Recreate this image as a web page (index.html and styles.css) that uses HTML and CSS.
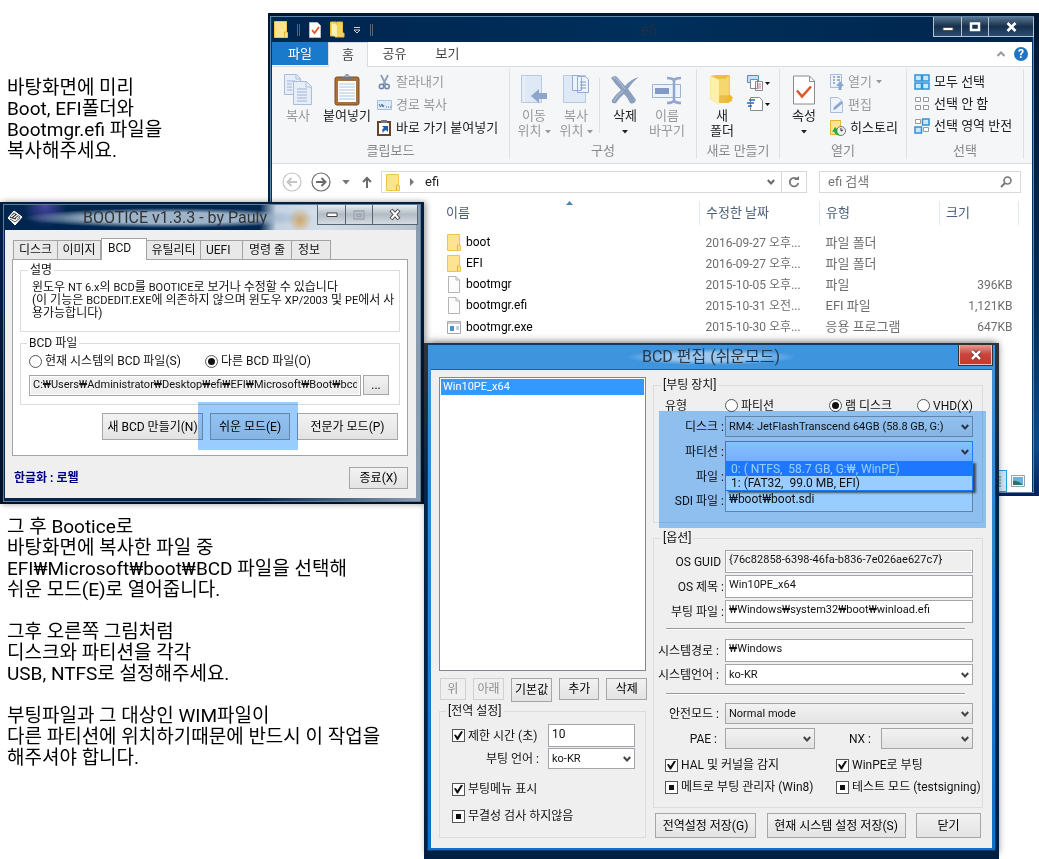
FILE: index.html
```html
<!DOCTYPE html>
<html lang="ko">
<head>
<meta charset="utf-8">
<title>BOOTICE BCD 설정 안내</title>
<link rel="stylesheet" href="styles.css">
</head>
<body>
<svg class="defs" aria-hidden="true">
  <symbol id="folder" viewBox="0 0 14 17"><path d="M.5.5h12v11h1v5H.5z" fill="#ffe391" stroke="#eec544"/><path d="M10.5 16v-5h2" fill="none" stroke="#e5b62d"/></symbol>
  <symbol id="page" viewBox="0 0 12 17"><path d="M.5.5h7.500l3.500 3.500v12.500H.5z" fill="#fcfcfc" stroke="#b5b5b5"/><path d="M8 .5V4h3.500" fill="none" stroke="#b5b5b5"/></symbol>
  <symbol id="chev" viewBox="0 0 8 6"><path d="M.8 1L4 4.500 7.200 1" fill="none" stroke="#444" stroke-width="2"/></symbol>
  <symbol id="down" viewBox="0 0 6 4"><path d="M0 0h6L3 3.500z" fill="currentColor"/></symbol>
</svg>
<main class="stage">
  <div class="note note-top">바탕화면에 미리<br>Boot, EFI폴더와<br>Bootmgr.efi 파일을<br>복사해주세요.</div>

  <section class="desk desk-explorer">
    <div class="explorer">
      <header class="ex-title">
        <svg class="i-folder" width="14" height="17"><use href="#folder"/></svg>
        <span class="tick"></span>
        <svg width="12" height="16" viewBox="0 0 12 16"><path d="M.5.5h8l3 3v12H.5z" fill="#fff" stroke="#bbb"/><path d="M3 8l2.500 3L10 5" fill="none" stroke="#e0562b" stroke-width="1.800"/></svg>
        <svg width="14" height="17" viewBox="0 0 14 17"><path d="M.5 1h6v14h-6zM7 1h5.500v11H14v4H5z" fill="#f5d262" stroke="#e9bb3f"/><path d="M2 2l5 2v12l-5-2z" fill="#fff0b0"/></svg>
        <svg width="8" height="8" viewBox="0 0 8 8"><path d="M1 1.500h6M1 4h6L4 7z" stroke="#fff" stroke-width=".8" fill="#111"/></svg>
        <span class="tick"></span>
        <h2>efi</h2>
        <div class="caption">
          <button aria-label="최소화"><svg width="12" height="10" viewBox="0 0 12 10"><path d="M1 5.500h10v3H1z" fill="#fff" stroke="#555"/></svg></button>
          <button aria-label="최대화"><svg width="12" height="10" viewBox="0 0 12 10"><path d="M2 1.500h8v6.500H2z" fill="none" stroke="#fff" stroke-width="2.500"/></svg></button>
          <button class="wide" aria-label="닫기"><svg width="11" height="10" viewBox="0 0 11 10"><path d="M1.500 1l8 8M9.500 1l-8 8" stroke="#fff" stroke-width="2.600"/></svg></button>
        </div>
      </header>
      <nav class="ex-tabs">
        <button class="file">파일</button><button class="home">홈</button><button>공유</button><button>보기</button>
        <svg class="up" width="10" height="8" viewBox="0 0 10 8"><path d="M1.500 6L5 2.500 8.500 6" fill="none" stroke="#999" stroke-width="2"/></svg>
        <span class="help">?</span>
      </nav>
      <div class="ribbon">
        <section class="grp g1">
          <div class="tools">
            <button class="big off w1"><svg width="28" height="32" viewBox="0 0 28 32"><g fill="#e7eef8" stroke="#a9bddb"><path d="M.5.5h12l4 4v16H.5z"/><path d="M9.500 7.500h13l5 5v18h-18z"/><path d="M22 8v5h5M12 .5V5h4" fill="none"/></g><path d="M3 7h8M3 10h5M3 13h5M3 16h5M13 15h10M13 18h10M13 21h10M13 24h10M13 27h10" stroke="#9fb3d3"/></svg><span>복사</span></button>
            <button class="big w2"><svg width="26" height="32" viewBox="0 0 26 32"><rect x="1" y="3" width="24" height="28" rx="2" fill="#a8703a" stroke="#7c4d22"/><path d="M4 7h18v21H4z" fill="#fff"/><path d="M5 10h16M5 13h16M5 16h16M5 19h16M5 22h16M5 25h16" stroke="#a9c3df"/><path d="M6 6q2-3 4-3 1-3 3-3t3 3q2 0 4 3z" fill="#707780"/><path d="M11 2h4" stroke="#ddd"/></svg><span>붙여넣기</span></button>
            <div class="stack">
              <button class="small off"><svg width="15" height="16" viewBox="0 0 15 16"><path d="M4 1l5 10M11 1L6 11" stroke="#8e9fb9" stroke-width="1.800"/><circle cx="4.500" cy="12.500" r="2.200" fill="none" stroke="#6f86ab" stroke-width="1.500"/><circle cx="10" cy="12.500" r="2.200" fill="none" stroke="#6f86ab" stroke-width="1.500"/></svg>잘라내기</button>
              <button class="small off"><svg width="15" height="10" viewBox="0 0 15 10"><path d="M.5.5h14v9H.5z" fill="#e0ebf8" stroke="#a5bfde"/><path d="M2 4l1.500 3L5 4l1 3 1-2M9 7h1M11 7h1M13 7h1" stroke="#54729e" fill="none"/></svg>경로 복사</button>
              <button class="small"><svg width="15" height="16" viewBox="0 0 15 16"><rect x="1" y="2" width="12" height="13" fill="#fff" stroke="#674424" stroke-width="2"/><path d="M4 0h6v3H4z" fill="#777"/><path d="M5 6h6v6L9 10q-3 1-3 3-2-4 1-5z" fill="#1c5ea8"/></svg>바로 가기 붙여넣기</button>
            </div>
          </div>
          <h3>클립보드</h3>
        </section>
        <section class="grp g2">
          <div class="tools">
            <button class="big off w3"><svg width="27" height="30" viewBox="0 0 27 30"><path d="M.5.5h20v27H.5z" fill="#dfe8f5" stroke="#b9c9e2"/><path d="M3 1v26" stroke="#f3f7fc"/><path d="M10 21l8-7v4h8v6h-8v4z" fill="#8ea6cc"/></svg><span>이동<br>위치 <svg width="6" height="4"><use href="#down"/></svg></span></button>
            <button class="big off w3"><svg width="27" height="30" viewBox="0 0 27 30"><path d="M.5.5h22v27H.5z" fill="#dfe8f5" stroke="#b9c9e2"/><path d="M9.500.5h7l2 2v13h-9zM14.500 1.500h8l3 3v13h-11z" fill="#edf3fb" stroke="#93abd0"/><path d="M17 7h6M17 10h6M17 13h6" stroke="#7e98c3"/></svg><span>복사<br>위치 <svg width="6" height="4"><use href="#down"/></svg></span></button>
            <span class="vline"></span>
            <button class="big w3"><svg width="30" height="30" viewBox="0 0 30 30"><path d="M1 3q4-4 7 0l7 8Q21 4 29 2q-6 4-11 12 4 5 8 11-2 5-6 3-2-5-6-9-5 4-8 9-5 1-4-3 3-5 9-10Q5 9 1 3z" fill="#8b9fbe"/><path d="M3 3q2-1 5 2l7 9M4 26q3-6 9-10" stroke="#b3c3da" fill="none"/></svg><span>삭제<br><svg width="6" height="4"><use href="#down"/></svg></span></button>
            <button class="big off w3"><svg width="30" height="28" viewBox="0 0 30 28"><path d="M.5 8.500h28v13H.5z" fill="#edf3fb" stroke="#9fb3d5"/><path d="M3 12h14v6H3z" fill="#8299c3"/><path d="M15 2q5 0 7 2 2-2 7-2M22 4v21M15 27q5 0 7-2 2 2 7 2" fill="none" stroke="#90a8cf" stroke-width="2.500"/></svg><span>이름<br>바꾸기</span></button>
          </div>
          <h3>구성</h3>
        </section>
        <section class="grp g3">
          <div class="tools">
            <button class="big w4"><svg width="28" height="33" viewBox="0 0 28 33"><path d="M2 2l6-1h14v20l3 3-4 6H8l-6-4z" fill="#e9bf45"/><path d="M2 2l9 4v26l-9-6z" fill="#fff0ac"/><path d="M11 5h7l3-4v21H11z" fill="#f6d66e"/><path d="M20 22l5 2-1 4-7 2z" fill="#edb92e"/></svg><span>새<br>폴더</span></button>
            <div class="stack pair">
              <svg width="24" height="17" viewBox="0 0 24 17"><path d="M.5.5h11v7H.5z" fill="#bfe2fa" stroke="#4794c9"/><path d="M3.500 4.500h7v9h-7zM8.500 6.500h7v9h-7z" fill="#fff" stroke="#888"/><path d="M10 9h4M10 11h4M10 13h4" stroke="#c78"/><path d="M18 7h5l-2.500 3z" fill="#111"/></svg>
              <svg width="24" height="17" viewBox="0 0 24 17"><path d="M3.500 1.500h9l3 3v10h-12z" fill="#fff" stroke="#888"/><path d="M0 7h7M2 4h6M1 10h4" stroke="#2668c5" stroke-width="1.500"/><path d="M18 7h5l-2.500 3z" fill="#111"/></svg>
            </div>
          </div>
          <h3>새로 만들기</h3>
        </section>
        <section class="grp g4">
          <div class="tools">
            <button class="big w5"><svg width="22" height="29" viewBox="0 0 22 29"><path d="M.5.5h16l5 5v23H.5z" fill="#fff" stroke="#8a8a8a"/><path d="M16.500 1v5H21" fill="none" stroke="#8a8a8a"/><path d="M4 15l5 6 9-10" fill="none" stroke="#e0562b" stroke-width="2.600"/></svg><span>속성<br><svg width="6" height="4"><use href="#down"/></svg></span></button>
            <div class="stack">
              <button class="small off"><svg width="14" height="16" viewBox="0 0 14 16"><path d="M.5.5h11v13H.5z" fill="#eef3fb" stroke="#a9bddb"/><path d="M3 3h2M3 6h2M3 9h2M7 3h3M7 6h3" stroke="#8299c3" stroke-width="1.500"/><path d="M6 12l4-5 4 5h-2.500v4h-3v-4z" fill="#8ea6cc"/></svg>열기 <svg class="dn" width="6" height="4"><use href="#down"/></svg></button>
              <button class="small off"><svg width="14" height="16" viewBox="0 0 14 16"><path d="M.5.5h8l4 4v11H.5z" fill="#eef3fb" stroke="#a9bddb"/><path d="M3 13l1-3 7-6 2 2-7 6z" fill="#8ea6cc"/></svg>편집</button>
              <button class="small"><svg width="16" height="16" viewBox="0 0 16 16"><path d="M.5.5h10v14H.5z" fill="#ffe391" stroke="#e5b62d"/><circle cx="11" cy="11" r="4.500" fill="#eee" stroke="#777"/><path d="M11 8v3l2-1" stroke="#333" fill="none"/><path d="M2 12l3-5 3 3-1 .5q0 3 3 5-5 0-6-4z" fill="#2bab3a"/></svg>히스토리</button>
            </div>
          </div>
          <h3>열기</h3>
        </section>
        <section class="grp g5">
          <div class="tools">
            <div class="stack tight">
              <button class="small"><svg width="16" height="16" viewBox="0 0 16 16"><path d="M1 1h6.500v6H1zM8.500 1H15v6H8.500zM1 9h6.500v6H1zM8.500 9H15v6H8.500z" fill="#c9e8fb" stroke="#2f93d6" stroke-width="1.500"/></svg>모두 선택</button>
              <button class="small"><svg width="16" height="16" viewBox="0 0 16 16"><path d="M1.500 1.500h5v4h-5zM9.500 1.500h5v4h-5zM1.500 9.500h5v4h-5zM9.500 9.500h5v4h-5z" fill="#fff" stroke="#999"/></svg>선택 안 함</button>
              <button class="small"><svg width="16" height="16" viewBox="0 0 16 16"><path d="M1.500 1.500h5v4h-5zM9.500 9.500h5v4h-5z" fill="#fff" stroke="#999"/><path d="M8.500 1H15v6H8.500zM1 9h6.500v6H1z" fill="#c9e8fb" stroke="#2f93d6" stroke-width="1.500"/></svg>선택 영역 반전</button>
            </div>
          </div>
          <h3>선택</h3>
        </section>
      </div>
      <div class="address">
        <svg width="20" height="20" viewBox="0 0 20 20"><circle cx="10" cy="10" r="9" fill="none" stroke="#c4c4c4" stroke-width="1.200"/><path d="M15 10H6M9.500 6L5.500 10l4 4" fill="none" stroke="#c4c4c4" stroke-width="1.800"/></svg>
        <svg width="20" height="20" viewBox="0 0 20 20"><circle cx="10" cy="10" r="9" fill="none" stroke="#6b6b6b" stroke-width="1.200"/><path d="M5 10h9M10.500 6l4 4-4 4" fill="none" stroke="#6b6b6b" stroke-width="2"/></svg>
        <svg class="grey" width="8" height="5" viewBox="0 0 6 4"><use href="#down"/></svg>
        <svg width="10" height="12" viewBox="0 0 10 12"><path d="M5 12V2M1 6l4-4 4 4" fill="none" stroke="#6b6b6b" stroke-width="2"/></svg>
        <div class="path">
          <svg width="14" height="17"><use href="#folder"/></svg>
          <svg width="5" height="8" viewBox="0 0 5 8"><path d="M0 0l4 4-4 4z" fill="#777"/></svg>
          <span>efi</span>
          <svg class="push" width="8" height="6"><use href="#chev"/></svg>
          <button aria-label="새로 고침"><svg width="12" height="12" viewBox="0 0 12 12"><path d="M9.500 3.500A4.300 4.300 0 1 0 10.300 7" fill="none" stroke="#777" stroke-width="1.800"/><path d="M6 4h5V0z" fill="#777"/></svg></button>
        </div>
        <label class="search"><input type="text" placeholder="efi 검색" aria-label="efi 검색"><svg width="12" height="12" viewBox="0 0 12 12"><circle cx="7.500" cy="4.500" r="3.500" fill="none" stroke="#777" stroke-width="1.600"/><path d="M5 7l-4 4" stroke="#777" stroke-width="2"/></svg></label>
      </div>
      <div class="ex-body">
        <table>
          <colgroup><col class="c1"><col class="c2"><col class="c3"><col class="c4"></colgroup>
          <thead><tr><th>이름<svg class="sort" width="7" height="4" viewBox="0 0 7 4"><path d="M0 4L3.500 0 7 4z" fill="#4b88ad"/></svg></th><th>수정한 날짜</th><th>유형</th><th>크기</th></tr></thead>
          <tbody>
            <tr><td><svg width="14" height="17"><use href="#folder"/></svg>boot</td><td>2016-09-27 오후...</td><td>파일 폴더</td><td></td></tr>
            <tr><td><svg width="14" height="17"><use href="#folder"/></svg>EFI</td><td>2016-09-27 오후...</td><td>파일 폴더</td><td></td></tr>
            <tr><td><svg width="14" height="17"><use href="#page"/></svg>bootmgr</td><td>2015-10-05 오후...</td><td>파일</td><td>396KB</td></tr>
            <tr><td><svg width="14" height="17"><use href="#page"/></svg>bootmgr.efi</td><td>2015-10-31 오전...</td><td>EFI 파일</td><td>1,121KB</td></tr>
            <tr><td><svg width="14" height="13" viewBox="0 0 14 13"><path d="M.5.5h13v12H.5z" fill="#fff" stroke="#aaa"/><path d="M1 2h12" stroke="#ccc" stroke-width="2"/><path d="M3 5h4v5H3z" fill="#4a94cc"/><path d="M9 6h3M9 8h3" stroke="#8ab"/></svg>bootmgr.exe</td><td>2015-10-30 오후...</td><td>응용 프로그램</td><td>647KB</td></tr>
          </tbody>
        </table>
        <div class="views">
          <button class="on" aria-label="자세히"><svg width="12" height="11" viewBox="0 0 12 11"><path d="M1 1h4M7 1h4M1 4h4M7 4h4M1 7h4M7 7h4M1 10h4M7 10h4" stroke="#777"/></svg></button>
          <button aria-label="큰 아이콘"><svg width="14" height="12" viewBox="0 0 14 12"><path d="M.5.5h13v11H.5z" fill="#fff" stroke="#8aa4b8"/><path d="M2 2h10v8H2z" fill="#67b3e3"/><path d="M2 6q5-1 10 4H2z" fill="#2b7561"/></svg></button>
        </div>
      </div>
    </div>
  </section>

  <section class="desk desk-boot">
    <div class="bootice">
      <header class="bt-title">
        <svg width="16" height="16" viewBox="0 0 16 16"><path d="M7 1l8 6-7 8-7-7z" fill="#fff" stroke="#fff"/><path d="M7 2.500l6.500 4.500L8 9.500 2.500 7.500z" fill="#222"/><path d="M4 7l4-3M6.500 8l4-3M9 8.500l3-2" stroke="#fff" stroke-width="1.200"/><path d="M3 9l5 3 5-4" stroke="#555" fill="none"/></svg>
        <h2>BOOTICE v1.3.3 - by Pauly</h2>
        <div class="caption glass">
          <button aria-label="최소화"><svg width="12" height="6" viewBox="0 0 12 6"><path d="M1 1h10v3.500H1z" fill="#fff" stroke="#444"/></svg></button>
          <button aria-label="최대화"><svg width="12" height="10" viewBox="0 0 12 10"><path d="M1 1h10v8H1zM4 4h4v2.500H4z" fill="none" stroke="#9aa3ad" stroke-width="1.300"/></svg></button>
          <button class="wide" aria-label="닫기"><svg width="12" height="11" viewBox="0 0 12 11"><path d="M2 1l8 9M10 1L2 10" stroke="#444" stroke-width="4"/><path d="M2.500 1.500l7 8M9.500 1.500l-7 8" stroke="#fff" stroke-width="2"/></svg></button>
        </div>
      </header>
      <div class="bt-body">
        <nav class="tabs"><button class="t1">디스크</button><button class="t2">이미지</button><button class="sel">BCD</button><button class="t3">유틸리티</button><button class="t4">UEFI</button><button class="t5">명령 줄</button><button class="t6">정보</button></nav>
        <div class="pane">
          <fieldset class="desc"><legend>설명</legend><p>윈도우 <span>NT 6.x</span>의 <span>BCD</span>를 <span>BOOTICE</span>로 보거나 수정할 수 있습니다<br>(이 기능은 <span>BCDEDIT.EXE</span>에 의존하지 않으며 윈도우 <span>XP/2003</span> 및 <span>PE</span>에서 사<br>용가능합니다)</p></fieldset>
          <fieldset class="bcdfile"><legend>BCD 파일</legend>
            <div class="radios"><label><input type="radio" name="src">현재 시스템의 BCD 파일(S)</label><label><input type="radio" name="src" checked>다른 BCD 파일(O)</label></div>
            <div class="filerow"><input class="box ro" type="text" aria-label="BCD 파일 경로" readonly value="C:₩Users₩Administrator₩Desktop₩efi₩EFI₩Microsoft₩Boot₩bcd"><button class="btn">...</button></div>
          </fieldset>
          <div class="modes"><button class="btn">새 BCD 만들기(N)</button><div class="mark-wrap"><button class="btn">쉬운 모드(E)</button><span class="mark"></span></div><button class="btn">전문가 모드(P)</button></div>
        </div>
        <footer><strong>한글화 : 로웰</strong><button class="btn">종료(X)</button></footer>
      </div>
    </div>
  </section>

  <div class="note note-bottom">그 후 Bootice로<br>바탕화면에 복사한 파일 중<br>EFI₩Microsoft₩boot₩BCD 파일을 선택해<br>쉬운 모드(E)로 열어줍니다.<br><br>그후 오른쪽 그림처럼<br>디스크와 파티션을 각각<br>USB, NTFS로 설정해주세요.<br><br>부팅파일과 그 대상인 WIM파일이<br>다른 파티션에 위치하기때문에 반드시 이 작업을<br>해주셔야 합니다.</div>

  <section class="desk desk-edit">
    <div class="edit">
      <header class="ed-title"><h2>BCD 편집 (쉬운모드)</h2><button aria-label="닫기"><svg width="12" height="10" viewBox="0 0 12 10"><path d="M2 1l8 8M10 1L2 9" stroke="#622" stroke-width="4"/><path d="M2 1l8 8M10 1L2 9" stroke="#fff" stroke-width="2.500"/></svg></button></header>
      <div class="ed-body">
        <div class="col-l">
          <ul class="list"><li>Win10PE_x64</li></ul>
          <div class="acts"><button class="btn a1" disabled>위</button><button class="btn a2" disabled>아래</button><button class="btn a3">기본값</button><button class="btn a4">추가</button><button class="btn a4">삭제</button></div>
          <fieldset class="global"><legend>[전역 설정]</legend>
            <div class="frow"><label><input type="checkbox" checked>제한 시간 (초)</label><input class="box" type="text" aria-label="제한 시간" value="10"></div>
            <div class="frow"><label class="r" for="bl">부팅 언어 :</label><span class="combo white"><select id="bl"><option>ko-KR</option></select><svg width="8" height="6"><use href="#chev"/></svg></span></div>
            <label class="c1"><input type="checkbox" checked>부팅메뉴 표시</label>
            <label class="c2"><input type="checkbox" class="mixed" checked>무결성 검사 하지않음</label>
          </fieldset>
        </div>
        <div class="col-r">
          <fieldset class="device"><legend>[부팅 장치]</legend>
            <div class="types"><span>유형</span><label><input type="radio" name="ty">파티션</label><label><input type="radio" name="ty" checked>램 디스크</label><label><input type="radio" name="ty">VHD(X)</label></div>
            <div class="row"><label for="dk">디스크 :</label><span class="combo"><select id="dk"><option>RM4: JetFlashTranscend 64GB (58.8 GB, G:)</option></select><svg width="8" height="6"><use href="#chev"/></svg></span></div>
            <div class="row part"><label for="pt">파티션 :</label><span class="combo open"><select id="pt"><option></option></select><svg width="8" height="6"><use href="#chev"/></svg><ul class="drop"><li class="cur">0: ( NTFS,&nbsp; 58.7 GB, G:₩, WinPE)</li><li>1: (FAT32,&nbsp; 99.0 MB, EFI)</li></ul></span></div>
            <div class="row"><label for="fl">파일 :</label><input id="fl" class="box" type="text"></div>
            <div class="row"><label for="sd">SDI 파일 :</label><input id="sd" class="box" type="text" value="₩boot₩boot.sdi"></div>
            <span class="mark"></span>
          </fieldset>
          <fieldset class="opts"><legend>[옵션]</legend>
            <div class="row"><label for="gu">OS GUID&nbsp;</label><input id="gu" class="box ro" type="text" readonly value="{76c82858-6398-46fa-b836-7e026ae627c7}"></div>
            <div class="row"><label for="tt">OS 제목 :</label><input id="tt" class="box" type="text" value="Win10PE_x64"></div>
            <div class="row"><label for="bf">부팅 파일 :</label><input id="bf" class="box" type="text" value="₩Windows₩system32₩boot₩winload.efi"></div>
            <hr>
            <div class="row n"><label for="sp">시스템경로 :</label><input id="sp" class="box" type="text" value="₩Windows"></div>
            <div class="row n"><label for="sl">시스템언어 :</label><span class="combo white"><select id="sl"><option>ko-KR</option></select><svg width="8" height="6"><use href="#chev"/></svg></span></div>
            <hr class="second">
            <div class="row n"><label for="sm">안전모드 :</label><span class="combo"><select id="sm"><option>Normal mode</option></select><svg width="8" height="6"><use href="#chev"/></svg></span></div>
            <div class="row n pae"><label for="pa">PAE :</label><span class="combo"><select id="pa"><option></option></select><svg width="8" height="6"><use href="#chev"/></svg></span><label for="nx">NX :</label><span class="combo"><select id="nx"><option></option></select><svg width="8" height="6"><use href="#chev"/></svg></span></div>
            <div class="checks"><label><input type="checkbox" checked>HAL 및 커널을 감지</label><label><input type="checkbox" checked>WinPE로 부팅</label><label><input type="checkbox" class="mixed" checked>메트로 부팅 관리자 (Win8)</label><label><input type="checkbox" class="mixed" checked>테스트 모드 (testsigning)</label></div>
          </fieldset>
          <div class="saves"><button class="btn">전역설정 저장(G)</button><button class="btn">현재 시스템 설정 저장(S)</button><button class="btn">닫기</button></div>
        </div>
      </div>
    </div>
  </section>
</main>
</body>
</html>
```
FILE: styles.css
```css
* { box-sizing: border-box; }
body { margin: 0; background: #fff; color: #111; font: 12px/16px Roboto, "Noto Sans CJK KR", sans-serif; }
button, input, select { font: inherit; color: inherit; margin: 0; padding: 0; border-radius: 0; }
button { background: none; border: 0; white-space: nowrap; }
h2, h3, p, ul { margin: 0; padding: 0; font-weight: 400; list-style: none; }
svg { flex: none; overflow: visible; }
.defs { position: absolute; width: 0; height: 0; }
.stage { position: relative; min-height: 859px; overflow: hidden; }

.note { position: absolute; left: 7px; font-size: 19px; line-height: 21px; color: #000; white-space: nowrap; }
.note-top { top: 77px; }
.note-bottom { top: 516px; }

.desk { position: absolute; }
.desk-explorer { left: 268px; right: 0; top: 13px; height: 483px; padding: 3px 5px 3px 2px; background: linear-gradient(#001630, #002b55 60%, #0a4a8c 90%, #07205c); }
.desk-boot { left: 0; top: 202px; width: 424px; padding: 2px 3px; background: linear-gradient(#001f42, #001228); box-shadow: 2px 0 6px rgba(0, 0, 0, .4); }
.desk-edit { left: 424px; top: 343px; width: 575px; height: 516px; padding: 1px 3px; background: linear-gradient(#333, #00244b 30%, #001f42); box-shadow: 1px -3px 8px -3px rgba(0, 0, 0, .7); }

/* Explorer */
.explorer { height: 100%; display: flex; flex-direction: column; border: 1px solid #5f86ab; padding: 0 1px; background: #00356b; font-size: 13px; }
.ex-title { height: 25px; display: flex; align-items: center; gap: 9px; padding-left: 2px; background: linear-gradient(90deg, #00254f, #002f5b 50%, #00254c); }
.ex-title h2 { flex: 1; text-align: center; padding-right: 8px; font-size: 15px; color: #22303f; }
.tick { width: 3px; height: 12px; border: solid #567; border-width: 0 1px; }
.caption { align-self: flex-start; display: flex; border: 1px solid #b4c3d1; border-top: 0; margin-right: -2px; }
.caption button { width: 27px; height: 19px; display: grid; place-items: center; background: linear-gradient(#5a7590, #16304d 50%, #2b4d71); border-left: 1px solid #b4c3d1; }
.caption button:first-child { border-left: 0; }
.caption .wide { width: 45px; }
.ex-tabs { height: 25px; display: flex; align-items: stretch; background: #fff; border-bottom: 1px solid #dadbdc; color: #444; }
.ex-tabs button { width: 53px; }
.ex-tabs .file { width: 56px; margin-bottom: 1px; background: #1979ca; color: #fff; }
.ex-tabs .home { width: 40px; background: #f5f6f7; border: solid #dadbdc; border-width: 1px 1px 0; margin-bottom: -1px; }
.ex-tabs .up { margin: auto 8px auto auto; }
.help { align-self: center; margin-right: 4px; width: 14px; height: 14px; border-radius: 50%; background: #1f74c4; color: #fff; font-weight: 700; line-height: 14px; text-align: center; font-size: 12px; }
.ribbon { height: 97px; display: flex; background: #f5f6f7; border-bottom: 1px solid #dadbdc; padding: 2px 0 4px; color: #222; }
.grp { display: flex; flex-direction: column; border-right: 1px solid #dfe0e1; }
.grp h3 { font-size: 13px; line-height: 16px; text-align: center; color: #888; }
.g1 { width: 238px; } .g2 { width: 187px; } .g3 { width: 83px; } .g4 { width: 127px; } .g5 { width: 117px; }
.tools { flex: 1; display: flex; }
.big { display: flex; flex-direction: column; align-items: center; justify-content: flex-start; padding-top: 5px; line-height: 15px; }
.big > svg { height: 32px; margin-bottom: 2px; }
.big span svg { vertical-align: middle; }
.off { color: #999; }
.w1 { width: 52px; } .w2 { width: 46px; } .w3 { width: 42px; } .w4 { width: 50px; } .w5 { width: 48px; }
.g2 .tools { padding-left: 3px; }
.vline { width: 1px; height: 55px; margin: 9px 4px 0 2px; background: #dfe0e1; }
.stack { display: flex; flex-direction: column; padding: 4px 0 0 7px; gap: 5px; }
.stack.pair { padding: 6px 0 0; gap: 4px; }
.small { height: 18px; display: flex; align-items: center; gap: 4px; }
.g4 .stack { padding-left: 2px; }
.stack.tight { gap: 4px; padding-left: 7px; }
.address { height: 36px; display: flex; align-items: center; padding: 0 11px 0 10px; gap: 9px; background: #fff; color: #222; }
.grey { color: #777; margin: 0 3px 0 2px; }
.path { flex: 1; height: 22px; display: flex; align-items: center; gap: 10px; border: 1px solid #d9d9d9; padding-left: 4px; margin-right: 3px; }
.path .push { margin-left: auto; opacity: .8; }
.path button { width: 25px; height: 20px; border-left: 1px solid #d9d9d9; display: grid; place-items: center; margin-left: -4px; }
.search { width: 202px; height: 22px; display: flex; align-items: center; border: 1px solid #d9d9d9; padding: 0 8px; }
.search input { flex: 1; min-width: 0; border: 0; outline: 0; }
.search input::placeholder { color: #777; opacity: 1; }
.ex-body { flex: 1; background: #fff; padding: 1px 13px 0 155px; display: flex; flex-direction: column; justify-content: space-between; }
table { table-layout: fixed; width: 100%; border-collapse: collapse; }
.c2 { width: 120px; } .c3 { width: 120px; } .c4 { width: 79px; }
th { position: relative; height: 24px; padding: 0 6px; text-align: left; font-weight: 400; color: #4c607a; border-right: 1px solid #e2eaf0; }
th:first-child { padding-left: 19px; }
.sort { position: absolute; left: 139px; top: 0; }
tbody::before { content: ""; display: block; height: 7px; }
td { height: 21px; padding: 0 6px; color: #6d6d6d; white-space: nowrap; }
td:first-child { padding-left: 20px; color: #000; font-size: 12px; }
td:nth-child(2) { font-size: 12px; }
td:last-child { text-align: right; font-size: 12px; }
td svg { vertical-align: middle; margin-right: 5px; }
.views { display: flex; justify-content: flex-end; gap: 2px; margin-right: -8px; }
.views button { width: 18px; height: 22px; display: grid; place-items: center; }
.views .on { width: 22px; background: #cbe8f6; border: 1px solid #26a0da; }

/* Shared dialog controls */
.btn { background: linear-gradient(#f2f2f2, #e3e3e3); border: 1px solid #a6a6a6; text-align: center; color: #000; }
.btn:disabled { color: #8d8d8d; background: #efefef; border-color: #d0d0d0; }
.box { width: 100%; min-width: 0; height: 23px; border: 1px solid #a3a5aa; background: #fff; padding: 0 3px 4px; font-size: 11px; }
.box.ro { background: #efefef; box-shadow: inset 0 0 0 1px #fff; }
#sd, .frow .box { font-size: 12px; }
fieldset { min-width: 0; margin: 0; padding: 0; border: 1px solid #dcdcdc; }
legend { margin-left: 7px; padding: 0 2px; line-height: 16px; height: 16px; }
label { white-space: nowrap; }
.radios label, .types label, .checks label, .frow label:first-child:has(input), .global > label { display: flex; align-items: center; }
input[type=radio], input[type=checkbox] { appearance: none; flex: none; width: 13px; height: 13px; border: 1px solid #555; background: #fff; display: grid; place-items: center; margin-right: 3px; }
input[type=radio] { border-radius: 50%; }
input[type=radio]:checked::before { content: ""; width: 7px; height: 7px; border-radius: 50%; background: #111; }
input[type=checkbox]:checked::before { content: ""; width: 9px; height: 9px; background: #111; clip-path: polygon(0 45%, 20% 40%, 38% 65%, 80% 0, 100% 8%, 45% 100%, 32% 100%); }
input.mixed:checked::before { width: 5px; height: 5px; clip-path: none; }
.combo { position: relative; display: block; height: 21px; }
.combo select { appearance: none; width: 100%; height: 21px; padding: 0 16px 0 3px; border: 1px solid #a3a5aa; background: linear-gradient(#f2f2f2, #e3e3e3); font-size: 11px; }
.combo.white select { background: #fff; }
.combo.open select { background: linear-gradient(#e4effc, #c2dcff); border-color: #39f; }
.combo > svg { position: absolute; right: 4px; top: 8px; pointer-events: none; }
.mark { position: absolute; z-index: 3; background: #9cf; mix-blend-mode: multiply; pointer-events: none; }

/* BOOTICE */
.bootice { border: 1px solid #5f7c98; padding: 0 4px 3px 1px; background: linear-gradient(90deg, #00264f 60%, #8da0b3); }
.bt-title { height: 25px; display: flex; align-items: center; padding-left: 2px; background: radial-gradient(circle at 40px 0, #4b46a6, transparent 22px), radial-gradient(circle at 295px 15px, #d9a75a, transparent 12px), linear-gradient(90deg, #00264f 62%, #c3d2e2 66%, #d5dfe9 78%, #b9c4ce); }
.bt-title h2 { flex: 1; text-align: center; font-size: 16px; color: #333; line-height: 20px; padding-left: 10px; background: radial-gradient(closest-side, #9db3c9 55%, transparent); }
.glass { border-color: #566473; }
.glass button { background: linear-gradient(#e7ecf1, #b3bcc5 50%, #d5dbe1); border-color: #566473; }
.bt-body { background: #efefef; padding: 7px 8px 9px 7px; }
.tabs { display: flex; align-items: flex-end; padding-left: 1px; height: 22px; }
.tabs button { height: 19px; background: #e9e9e9; border: 1px solid #a3a3a3; border-bottom: 0; border-left-width: 0; text-align: center; }
.tabs .t1 { width: 45px; border-left-width: 1px; } .tabs .t2 { width: 43px; } .tabs .t3 { width: 54px; } .tabs .t4 { width: 42px; text-align: left; padding-left: 5px; } .tabs .t5 { width: 49px; } .tabs .t6 { width: 39px; text-align: left; padding-left: 6px; }
.tabs .sel { position: relative; width: 46px; height: 22px; background: #fff; margin-bottom: -1px; border-left-width: 1px; text-align: left; padding: 0 0 3px 6px; }
.pane { border: 1px solid #a3a3a3; background: #fff; padding: 2px 7px 14px; height: 197px; }
.desc { height: 70px; }
.desc p { padding: 3px 11px; line-height: 13px; white-space: nowrap; }
.desc span { font-size: 11px; }
.bcdfile { height: 70px; margin-top: 3px; padding: 1px 8px; }
.bcdfile legend { margin-left: -2px; }
.radios { display: grid; grid-template-columns: 176px 1fr; padding-top: 1px; }
.filerow { display: flex; gap: 2px; margin-top: 6px; }
.filerow .box { width: 332px; height: 21px; padding-bottom: 2px; }
.filerow .btn { width: 26px; height: 20px; }
.modes { display: flex; justify-content: flex-end; gap: 7px; margin-top: 8px; padding-right: 2px; }
.modes .btn { width: 101px; height: 27px; }
.modes .mark-wrap { position: relative; }
.modes .mark-wrap .btn { width: 80px; }
.mark-wrap .mark { inset: -11px -8px -10px -12px; }
footer { display: flex; justify-content: space-between; align-items: center; margin-top: 11px; padding-left: 2px; }
footer strong { color: #000080; }
footer .btn { width: 59px; height: 22px; }

/* BCD editor */
.edit { height: 507px; border: 1px solid #143a63; padding: 0 3px 2px; background: linear-gradient(#3d93dd, #0d6fc6); }
.ed-title { height: 25px; display: flex; align-items: center; padding-left: 32px; background: #3e95de; border-bottom: 1px solid #245e95; }
.ed-title h2 { width: 170px; margin: 0 auto; text-align: center; font-size: 16px; color: #26384a; background: radial-gradient(closest-side, #9bc7ef 50%, transparent); }
.ed-title button { align-self: flex-start; width: 33px; height: 20px; display: grid; place-items: center; background: linear-gradient(#e79a94, #c8443a 50%, #c63a2c); border: 1px solid #f0c0bc; border-top: 0; outline: 1px solid #333; }
.ed-body { display: grid; grid-template-columns: 208px 330px; gap: 6px; padding: 7px 8px 12px; height: 478px; background: #efefef; }
.list { height: 294px; border: 1px solid #828790; background: #fff; padding: 1px; width: 207px; }
.list li { height: 16px; line-height: 15px; background: #39f; color: #fff; padding-left: 2px; font-size: 11px; }
.acts { display: flex; align-items: flex-start; gap: 7px; padding: 7px 0 0 1px; }
.acts .btn { height: 22px; }
.acts .a1 { width: 26px; } .acts .a2 { width: 32px; } .acts .a3 { width: 41px; height: 24px; } .acts .a4 { width: 41px; }
.global { width: 207px; height: 135px; padding: 0 10px 0 12px; margin-top: 1px; }
.global legend { margin-left: -6px; }
.frow { display: grid; grid-template-columns: 96px 1fr; align-items: center; margin-top: 1px; }
.frow:first-of-type { margin-top: 5px; }
.frow .r { text-align: right; padding-right: 9px; }
.global .c1 { margin-top: 12px; }
.global .c2 { margin-top: 11px; }
.device { position: relative; height: 146px; }
.device .mark { left: 5px; right: -4px; top: 18px; bottom: -6px; }
.types { display: flex; height: 23px; align-items: center; padding: 2px 0 0 11px; }
.types span { flex: none; width: 60px; }
.types label { flex: none; width: 104px; }
.types label + label { width: 88px; }
.types label:last-child { width: 60px; }
.row { display: grid; grid-template-columns: 71px 1fr; align-items: center; margin-bottom: 2px; padding-right: 9px; }
.row > label { text-align: right; padding-right: 1px; }
.row.n > label { padding-right: 6px; }
.device .row { margin-bottom: 4px; }
.device .row .box { height: 22px; }
.device .row:has(.box) { margin-bottom: 2px; }
.drop { position: absolute; left: 0; right: 0; top: 20px; z-index: 2; background: #fff; border: 1px solid #39f; box-shadow: 3px 2px 2px rgba(0, 0, 0, .6); }
.drop li { height: 14px; line-height: 14px; padding-left: 5px; }
.drop .cur { background: #3296ff; color: #fff; }
.opts { height: 278px; margin-top: 7px; }
.opts .row:first-of-type { margin-top: 4px; }
.opts hr { height: 2px; border: 0; border-top: 1px solid #999; border-bottom: 1px solid #fff; margin: 5px 17px 9px 12px; }
.opts hr.second { margin-top: 8px; margin-bottom: 8px; }
.opts .row.pae { grid-template-columns: 71px 90px 66px 92px; margin-top: 4px; }
.opts .row.pae label { padding-right: 8px; }
.opts .row.pae label:nth-of-type(2) { padding-right: 10px; }
.checks { display: grid; grid-template-columns: 171px 1fr; gap: 6px 0; padding: 6px 0 0 11px; }
.saves { display: flex; justify-content: space-between; padding: 5px 2px 0; }
.saves .btn { width: 101px; height: 25px; }
.saves .btn:nth-child(2) { width: 139px; }
.saves .btn:nth-child(3) { width: 65px; }
```
